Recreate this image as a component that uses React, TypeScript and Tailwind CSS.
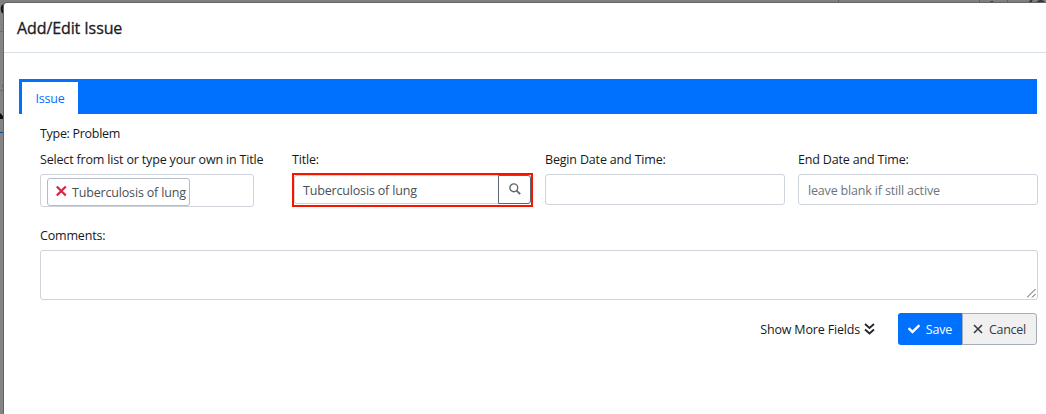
import type { ReactNode } from 'react';
import { FaCheck } from 'react-icons/fa';

function Field({ label, className, children }: { label: string; className: string; children: ReactNode }) {
  return (
    <div className={className}>
      <div className="h-[23px] leading-[20px] whitespace-nowrap">{label}</div>
      {children}
    </div>
  );
}

function Backdrop() {
  return (
    <svg className="absolute inset-0" width="1046" height="414" aria-hidden="true">
      <rect width="1046" height="414" fill="#868482" />
      <rect width="1046" height="3" fill="#808080" />
      <path d="M838.5 0v3M979.5 0v3M1007.5 0v3" stroke="#5f5f5f" />
      <path d="M990 3l2-1 1 1M1029 3l3-3M1037 2.500q4-3 7 0" stroke="#30363c" strokeWidth="2" fill="none" />
      <path d="M4 5C1 6 1 12 4 13" stroke="#151515" strokeWidth="2" fill="none" />
      <path d="M0 31.500h4M0 90.500h4" stroke="#6e6e6e" />
      <path d="M4 78L2 87h2z" fill="#626262" />
      <path d="M0 113l4 4v2H0z" fill="#111" />
      <path d="M0 132.500h4" stroke="#0b4a9c" />
    </svg>
  );
}

export default function App() {
  return (
    <div className="relative h-[414px] w-[1046px] overflow-hidden pt-[3px] pl-1 font-['Open_Sans','Noto_Sans',sans-serif] text-[12.5px] tracking-[-0.17px] text-[#16191c]">
      <Backdrop />
      <main className="relative h-[411px] w-[1042px] rounded-tl-[3px] bg-white shadow-[0_0_0_1px_#646464]">
        <header className="flex h-[50px] items-center border-b border-[#d8dfe6] pl-[13px]">
          <h1 className="text-[16px] tracking-[-0.1px] [-webkit-text-stroke:0.3px_#212529]">Add/Edit Issue</h1>
        </header>

        <nav className="mt-[26px] ml-[15px] flex h-[35px] w-[1018px] bg-[#0070ff] pt-[3px] pl-[3px]">
          <button className="flex w-14 items-center justify-center bg-white pt-[2px] text-[#0070ff]">Issue</button>
        </nav>

        <form className="ml-9 w-[998px]">
          <div className="h-9 pt-[10px] leading-[20px] tracking-[-0.3px]">Type: Problem</div>
          <div className="flex h-[76px]">
            <Field className="w-[252px]" label="Select from list or type your own in Title">
              <div className="mt-[1px] flex h-[33px] w-[214px] rounded-[3px] border border-[#ced4da] pt-[3px] pl-[6px]">
                <div className="flex h-[28px] w-[143px] items-center gap-[5px] rounded-[3px] border border-[#b4bcc8] pl-2 whitespace-nowrap text-[#495057]">
                  <svg width="11" height="12" viewBox="0 0 11 12" className="mb-[3px] shrink-0" aria-hidden="true">
                    <path d="M.8 1.500l9 9M9.800 1.500l-9 9" stroke="#dc2345" strokeWidth="2.300" />
                  </svg>
                  <span className="pt-[3px]">Tuberculosis of lung</span>
                </div>
              </div>
            </Field>
            <Field className="w-[253px]" label="Title:">
              <div className="flex h-[34px] w-[241px] border-2 border-[#fa1400] pb-px">
                <div className="flex flex-1 items-center rounded-l-[3px] border border-r-0 border-[#ced4da] pt-[3px] pl-2 text-[#495057]">
                  Tuberculosis of lung
                </div>
                <button type="button" aria-label="Search" className="flex w-[33px] items-center justify-center rounded-r-[3px] border border-[#5c6670] pb-px">
                  <svg width="12" height="12" viewBox="0 0 12 12" fill="none" stroke="#5c6670" strokeWidth="1.400" aria-hidden="true">
                    <circle cx="4.800" cy="4.800" r="3.900" />
                    <path d="M7.600 7.600l3.600 3.600" strokeWidth="1.800" />
                  </svg>
                </button>
              </div>
            </Field>
            <Field className="w-[253px]" label="Begin Date and Time:">
              <div className="mt-[1px] h-[31px] w-[240px] rounded-[3px] border border-[#ced4da]" />
            </Field>
            <Field className="w-[240px]" label="End Date and Time:">
              <div className="mt-[1px] flex h-[31px] items-center rounded-[3px] border border-[#ced4da] pt-[3px] pl-[9px] text-[#6c757d]">
                leave blank if still active
              </div>
            </Field>
          </div>
          <div className="h-[24px] leading-[20px]">Comments:</div>
          <div className="flex h-[50px] items-end justify-end rounded-[3px] border border-[#ced4da] pr-px pb-px">
            <svg width="9" height="9" viewBox="0 0 9 9" aria-hidden="true">
              <path d="M0 8.500L8.500 0M5 8.500L8.500 5" stroke="#555" strokeWidth="1" />
            </svg>
          </div>
          <div className="mt-[13px] flex h-8 items-center justify-end pr-px">
            <button type="button" className="mr-[23px] flex items-center gap-1 whitespace-nowrap">
              <span className="pt-[2px]">Show More Fields</span>
              <svg width="11" height="12" viewBox="0 0 11 12" fill="none" aria-hidden="true">
                <path d="M1 1l4.500 4L10 1M1 6.500l4.500 4 4.500-4" stroke="#212529" strokeWidth="1.800" />
              </svg>
            </button>
            <button type="button" className="flex h-8 w-16 items-center justify-center gap-[6px] rounded-l-[3px] bg-[#0070ff] text-white">
              <FaCheck size={12} />
              <span className="pt-[2px]">Save</span>
            </button>
            <button type="button" className="flex h-8 w-[75px] items-center gap-[6px] rounded-r-[3px] border border-[#a5adb8] bg-[#f0f0f0] pl-[10px] text-[#343a40]">
              <svg width="10" height="10" viewBox="0 0 10 10" aria-hidden="true">
                <path d="M1 1l8 8M9 1L1 9" stroke="#343a40" strokeWidth="1.600" />
              </svg>
              <span className="pt-[2px] tracking-[-0.3px]">Cancel</span>
            </button>
          </div>
        </form>
      </main>
    </div>
  );
}
